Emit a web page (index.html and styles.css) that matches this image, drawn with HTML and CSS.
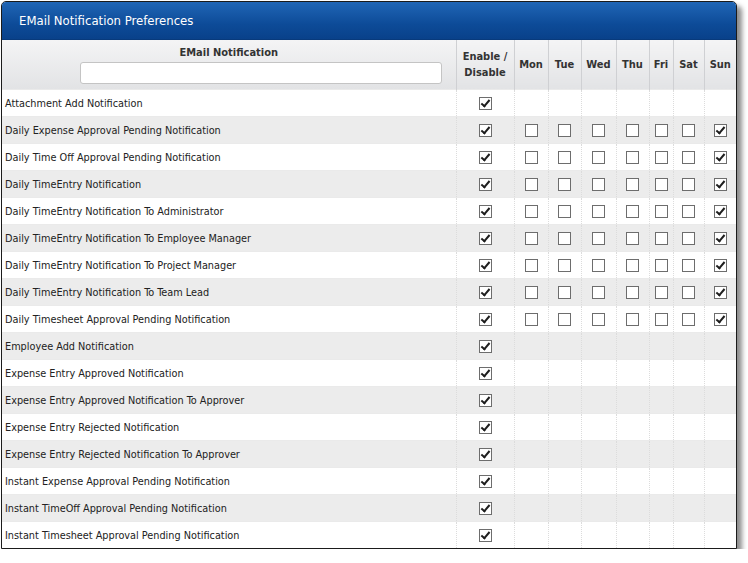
FILE: index.html
```html
<!DOCTYPE html>
<html lang="en">
<head>
  <meta charset="UTF-8" />
  <title>EMail Notification Preferences</title>
  <link rel="stylesheet" href="styles.css">
</head>
<body>
  <div class="panel">
    <div class="panel-title">EMail Notification Preferences</div>
    <table class="prefs">
      <colgroup>
        <col class="c-name"><col class="c-enable"><col class="c-mon"><col class="c-tue"><col class="c-wed">
        <col class="c-thu"><col class="c-fri"><col class="c-sat"><col class="c-sun">
      </colgroup>
      <thead>
        <tr>
          <th class="name-head">
            <div>EMail Notification</div>
            <input type="text" class="filter">
          </th>
          <th>Enable /<br>Disable</th>
          <th>Mon</th><th>Tue</th><th>Wed</th><th>Thu</th><th>Fri</th><th>Sat</th><th>Sun</th>
        </tr>
      </thead>
      <tbody id="rows"></tbody>
    </table>
  </div>

  <script>
    const notifications = [
      ["Attachment Add Notification", false],
      ["Daily Expense Approval Pending Notification", true],
      ["Daily Time Off Approval Pending Notification", true],
      ["Daily TimeEntry Notification", true],
      ["Daily TimeEntry Notification To Administrator", true],
      ["Daily TimeEntry Notification To Employee Manager", true],
      ["Daily TimeEntry Notification To Project Manager", true],
      ["Daily TimeEntry Notification To Team Lead", true],
      ["Daily Timesheet Approval Pending Notification", true],
      ["Employee Add Notification", false],
      ["Expense Entry Approved Notification", false],
      ["Expense Entry Approved Notification To Approver", false],
      ["Expense Entry Rejected Notification", false],
      ["Expense Entry Rejected Notification To Approver", false],
      ["Instant Expense Approval Pending Notification", false],
      ["Instant TimeOff Approval Pending Notification", false],
      ["Instant Timesheet Approval Pending Notification", false]
    ];

    const box = (checked) => `<span class="box${checked ? ' checked' : ''}"></span>`;

    const tbody = document.getElementById('rows');
    notifications.forEach(([name, daily]) => {
      const tr = document.createElement('tr');
      let html = `<td class="name">${name}</td><td class="cb">${box(true)}</td>`;
      for (let d = 0; d < 7; d++) {
        html += `<td class="cb">${daily ? box(d === 6) : ''}</td>`;
      }
      tr.innerHTML = html;
      tbody.appendChild(tr);
    });
  </script>
</body>
</html>
```

FILE: styles.css
```css
body {
  margin: 0;
  padding: 1px 0 0 1px;
  background: #fff;
  font-family: Tahoma, "DejaVu Sans Condensed", "Liberation Sans", sans-serif;
  color: #222;
}
.panel {
  width: 734px;
  border: 1px solid #1b1b1b;
  border-radius: 5px 5px 0 0;
  box-shadow: 5px 5px 5px rgba(0, 0, 0, 0.45);
  background: #fff;
}
.panel-title {
  height: 37px;
  line-height: 37px;
  padding-left: 17px;
  border-radius: 4px 4px 0 0;
  background: linear-gradient(#2066b6, #0d4b98 60%, #09418a);
  color: #fff;
  font-size: 13px;
  border-bottom: 1px solid #083a7c;
}
.prefs {
  width: 100%;
  border-collapse: collapse;
  table-layout: fixed;
  font-size: 10.8px;
}
.c-name { width: 454px; }
.c-enable { width: 58px; }
.c-mon { width: 34px; }
.c-tue { width: 33px; }
.c-wed { width: 35px; }
.c-thu { width: 33px; }
.c-fri { width: 24px; }
.c-sat { width: 31px; }
.c-sun { width: 32px; }
.prefs th {
  height: 44px;
  padding: 0;
  background: linear-gradient(#f4f4f5, #e2e3e5);
  border-left: 1px solid #cfd0d3;
  color: #333;
  font-size: 11px;
  font-weight: bold;
  line-height: 16px;
  text-align: center;
  vertical-align: middle;
}
.prefs th.name-head {
  border-left: none;
  vertical-align: top;
  padding-top: 5px;
}
.filter {
  display: block;
  box-sizing: border-box;
  width: 362px;
  height: 22px;
  margin: 1px 0 0 78px;
  border: 1px solid #c4c4c4;
  border-radius: 3px;
  background: #fff;
}
.prefs td {
  height: 26px;
  padding: 0;
  border-left: 1px dotted #dcdcdc;
  border-top: 1px solid #eaeaea;
}
.prefs tbody tr:nth-child(even) td {
  background: #ececec;
}
.prefs td.name {
  border-left: none;
  padding-left: 3px;
  color: #222;
}
.prefs td.cb {
  text-align: center;
}
.box {
  display: inline-block;
  position: relative;
  width: 11px;
  height: 11px;
  border: 1px solid #6d6d6d;
  background: #fff;
  vertical-align: middle;
}
.box.checked::after {
  content: "";
  position: absolute;
  left: 3px;
  top: 0px;
  width: 3px;
  height: 7px;
  border: solid #1e1e1e;
  border-width: 0 2px 2px 0;
  transform: rotate(40deg);
}
```
